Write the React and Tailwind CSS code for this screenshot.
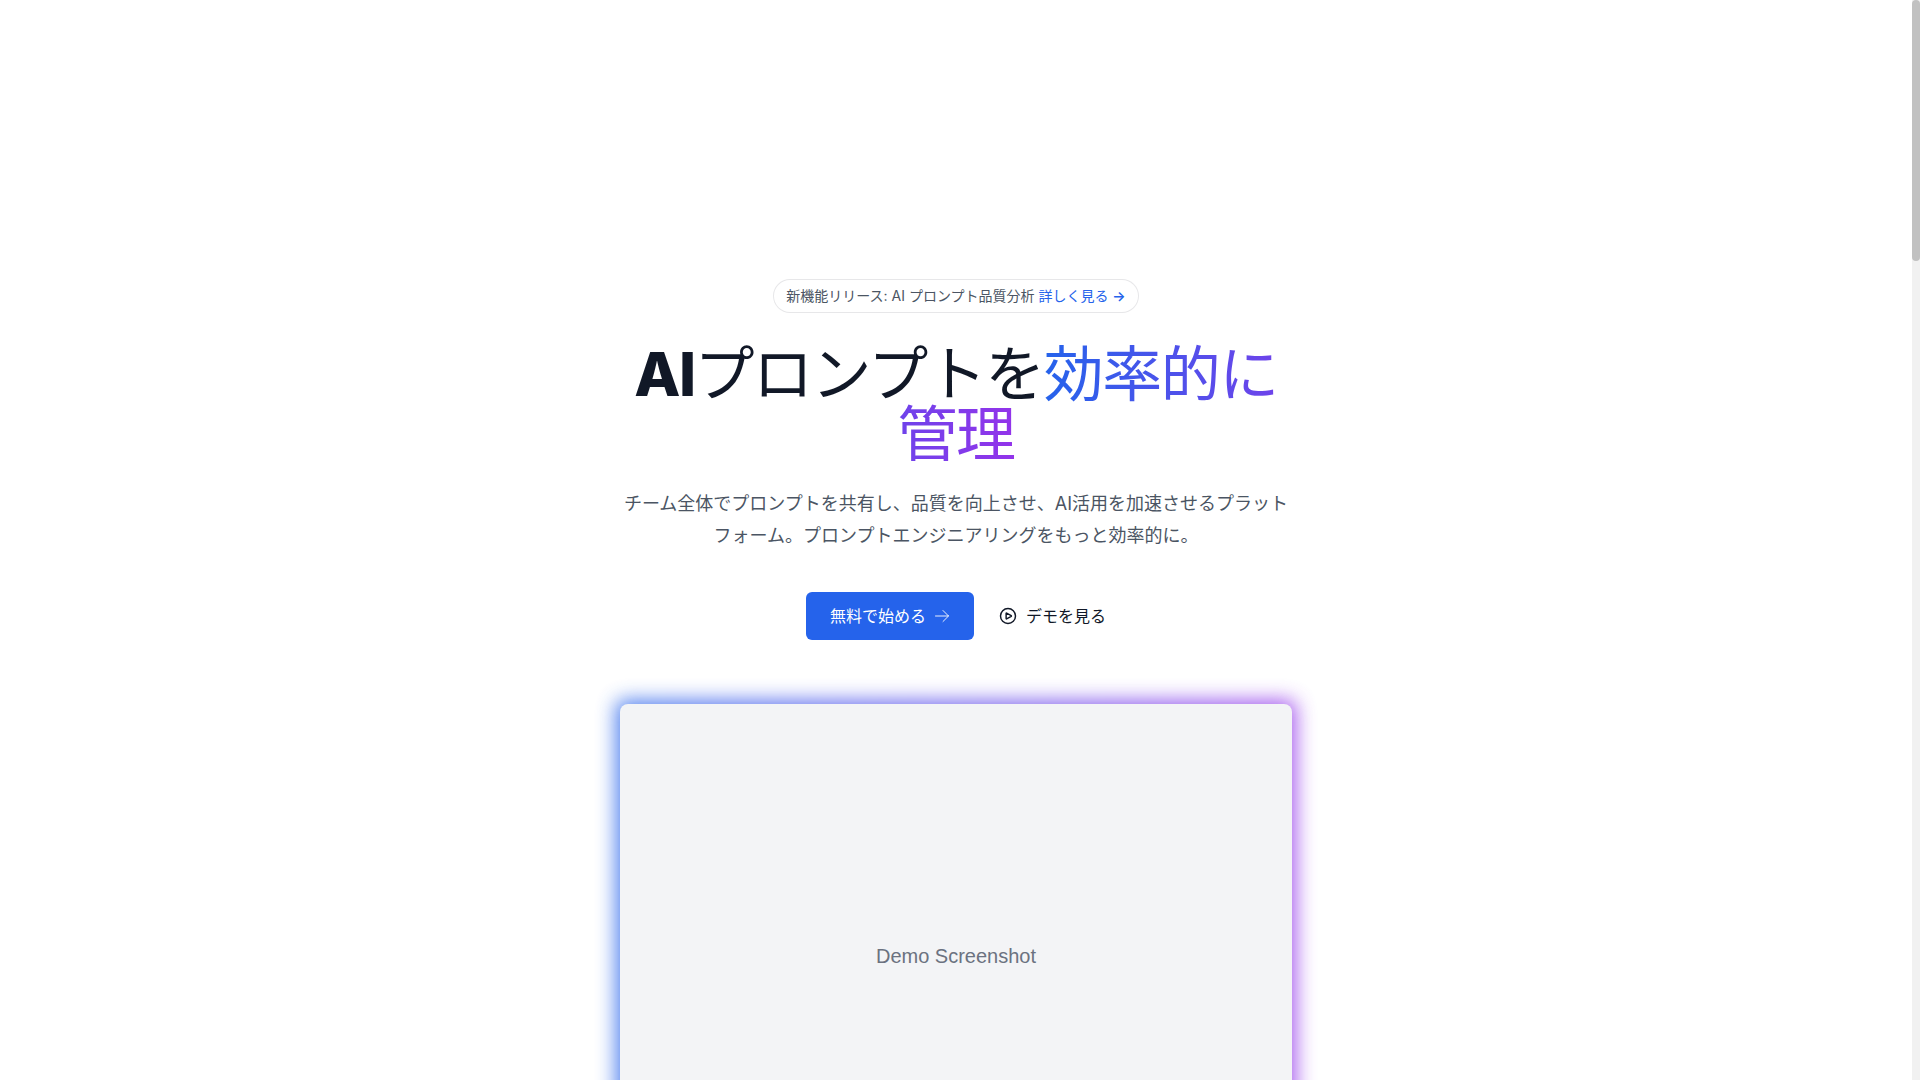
const ArrowIcon = () => (
  <svg
    className="h-4 w-4"
    fill="none"
    viewBox="0 0 16 16"
    stroke="currentColor"
    strokeWidth={0.9}
    strokeLinecap="round"
    strokeLinejoin="round"
    aria-hidden="true"
  >
    <path d="M1.5 8h13M9 2.5L14.5 8 9 13.5" />
  </svg>
);

const PlayIcon = () => (
  <svg
    className="h-5 w-5"
    fill="none"
    viewBox="0 0 24 24"
    stroke="currentColor"
    strokeWidth={1.75}
    strokeLinecap="round"
    strokeLinejoin="round"
    aria-hidden="true"
  >
    <path d="M21 12a9 9 0 11-18 0 9 9 0 0118 0z" />
    <path d="M15.91 11.672a.375.375 0 010 .656l-5.603 3.113a.375.375 0 01-.557-.328V8.887c0-.286.307-.466.557-.327l5.603 3.112z" />
  </svg>
);

const Hero = () => {
  return (
    <section className="mx-auto max-w-2xl pt-[280px]">
      <div className="flex justify-center">
        <div className="rounded-full px-3 py-1 text-sm leading-6 text-[#4b5563] ring-1 ring-[#111827]/10">
          新機能リリース: AI プロンプト品質分析{" "}
          <a href="#features" className="text-[#2563eb]">
            詳しく見る{" "}
            <span className="font-semibold" aria-hidden="true">
              →
            </span>
          </a>
        </div>
      </div>

      <div className="text-center">
        <h1 className="mt-8 text-6xl leading-none font-normal tracking-tight text-[#111827]">
          <span className="font-extrabold">AI</span>プロンプトを
          <span className="bg-linear-to-r/srgb from-[#2563eb] to-[#9333ea] bg-clip-text text-transparent">
            効率的に管理
          </span>
        </h1>
        <p className="mt-6 text-lg leading-8 text-[#4b5563]">
          チーム全体でプロンプトを共有し、品質を向上させ、AI活用を加速させるプラットフォーム。プロンプトエンジニアリングをもっと効率的に。
        </p>
        <div className="mt-10 flex items-center justify-center gap-6">
          <button
            type="button"
            className="flex h-12 items-center gap-2 rounded-md bg-[#2563eb] px-6 text-base text-white hover:bg-[#1d4ed8]"
          >
            無料で始める
            <ArrowIcon />
          </button>
          <button
            type="button"
            className="flex items-center gap-2 text-base text-[#111827]"
          >
            <PlayIcon />
            デモを見る
          </button>
        </div>
      </div>

      <div className="relative mt-16">
        <div className="absolute -inset-1 rounded-lg bg-linear-to-r/srgb from-[#2563eb] to-[#9333ea] opacity-80 blur-[10px]" />
        <div className="relative flex aspect-4/3 items-center justify-center rounded-lg bg-[#f3f4f6] font-['Liberation_Sans',sans-serif] text-xl text-[#6b7280]">
          Demo Screenshot
        </div>
      </div>
    </section>
  );
};

const Scrollbar = () => (
  <div className="fixed inset-y-0 right-0 w-2 bg-[#f1f1f1]" aria-hidden="true">
    <div className="h-[261px] rounded-full bg-[#c1c1c1]" />
  </div>
);

const App = () => {
  return (
    <main className="h-screen overflow-hidden bg-white pr-2 font-['Inter','Noto_Sans_CJK_JP',sans-serif]">
      <Hero />
      <Scrollbar />
    </main>
  );
};

export default App;
